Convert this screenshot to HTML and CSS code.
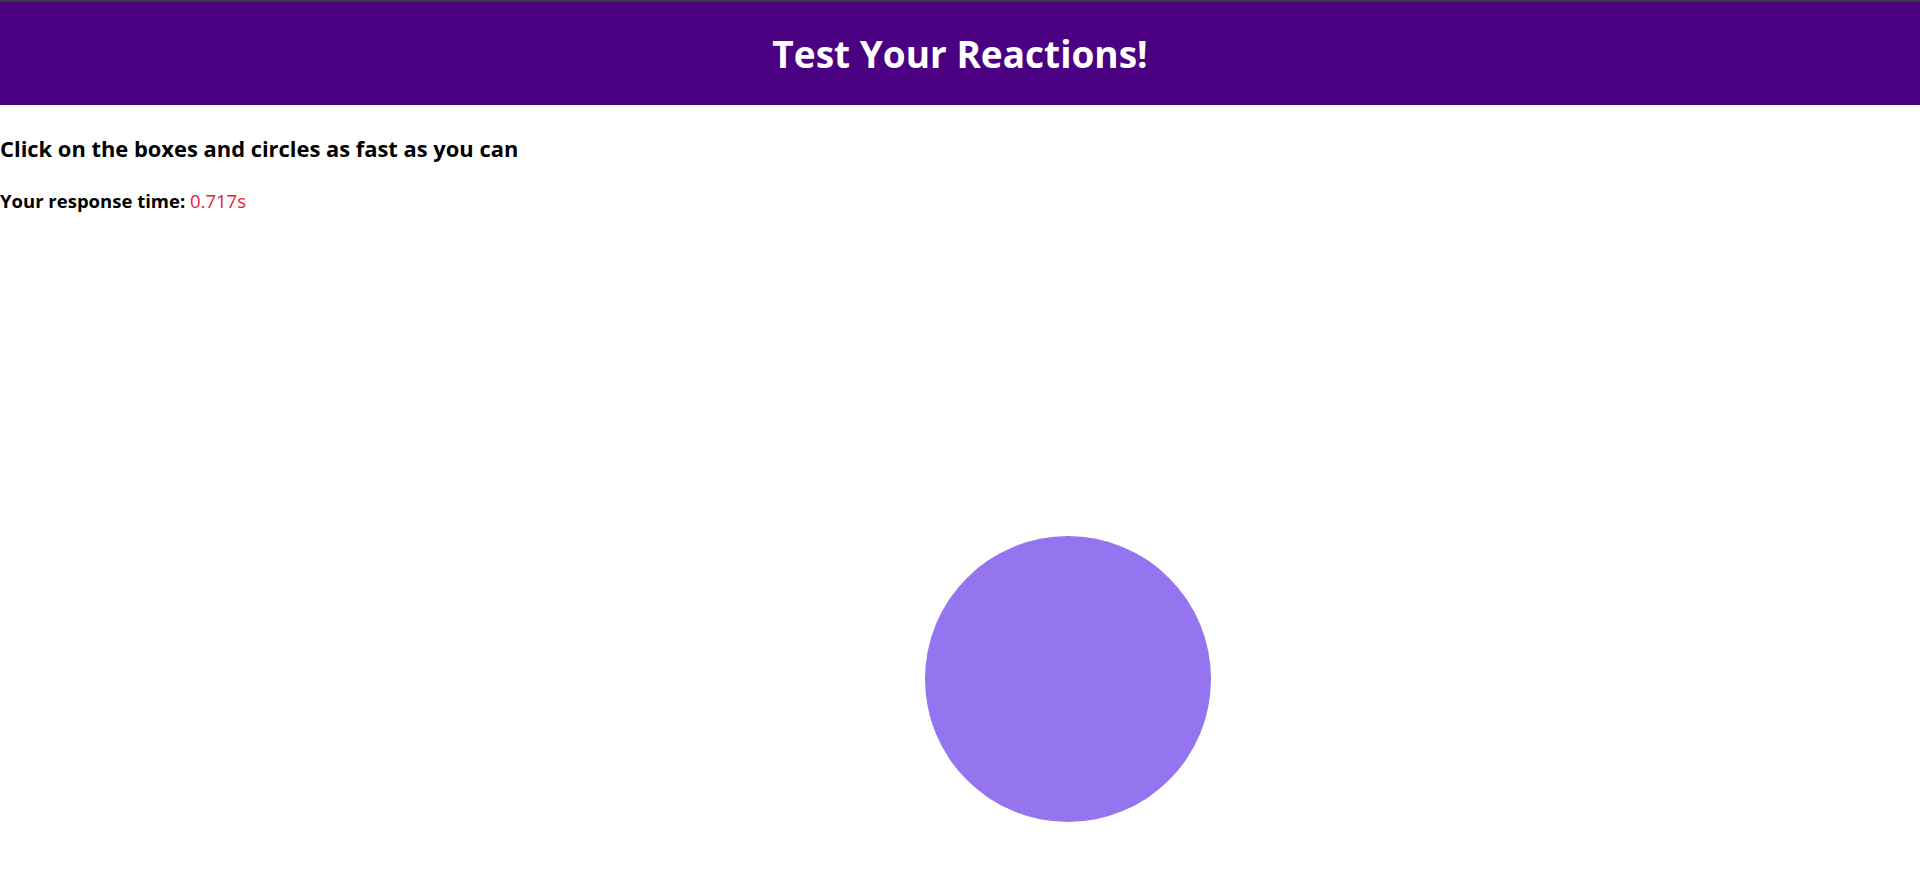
FILE: index.html
```html
<!DOCTYPE html>
<html lang="en">
<head>
<meta charset="utf-8">
<title>Test Your Reactions!</title>
<link rel="stylesheet" href="styles.css">
</head>
<body>
<div class="topline"></div>
<header class="banner">
  <h1 class="title">Test Your Reactions!</h1>
</header>
<main class="content">
  <h3 class="instructions">Click on the boxes and circles as fast as you can</h3>
  <p class="result"><span class="label">Your response time:</span> <span class="time">0.717s</span></p>
</main>
<div class="shape"></div>
</body>
</html>
```
FILE: styles.css
```css
html, body {
  margin: 0;
  padding: 0;
  background: #ffffff;
  font-family: "Open Sans", "Noto Sans", "DejaVu Sans", sans-serif;
  color: #000;
}
.topline {
  height: 2px;
  background: #3c3c3c;
}
.banner {
  background: #4b0082;
  height: 103px;
  display: flex;
  align-items: center;
  justify-content: center;
}
.title {
  margin: 0;
  color: #ffffff;
  font-size: 37px;
  font-weight: 700;
}
.content {
  padding: 0;
}
.instructions {
  margin: 29px 0 0;
  font-size: 21.9px;
  font-weight: 700;
  line-height: 30px;
}
.result {
  margin: 24px 0 0;
  font-size: 18.5px;
  line-height: 26px;
}
.label {
  font-weight: 700;
}
.time {
  color: #e3242b;
}
.shape {
  position: absolute;
  left: 925px;
  top: 536px;
  width: 286px;
  height: 286px;
  border-radius: 50%;
  background: #9574ef;
}
```
